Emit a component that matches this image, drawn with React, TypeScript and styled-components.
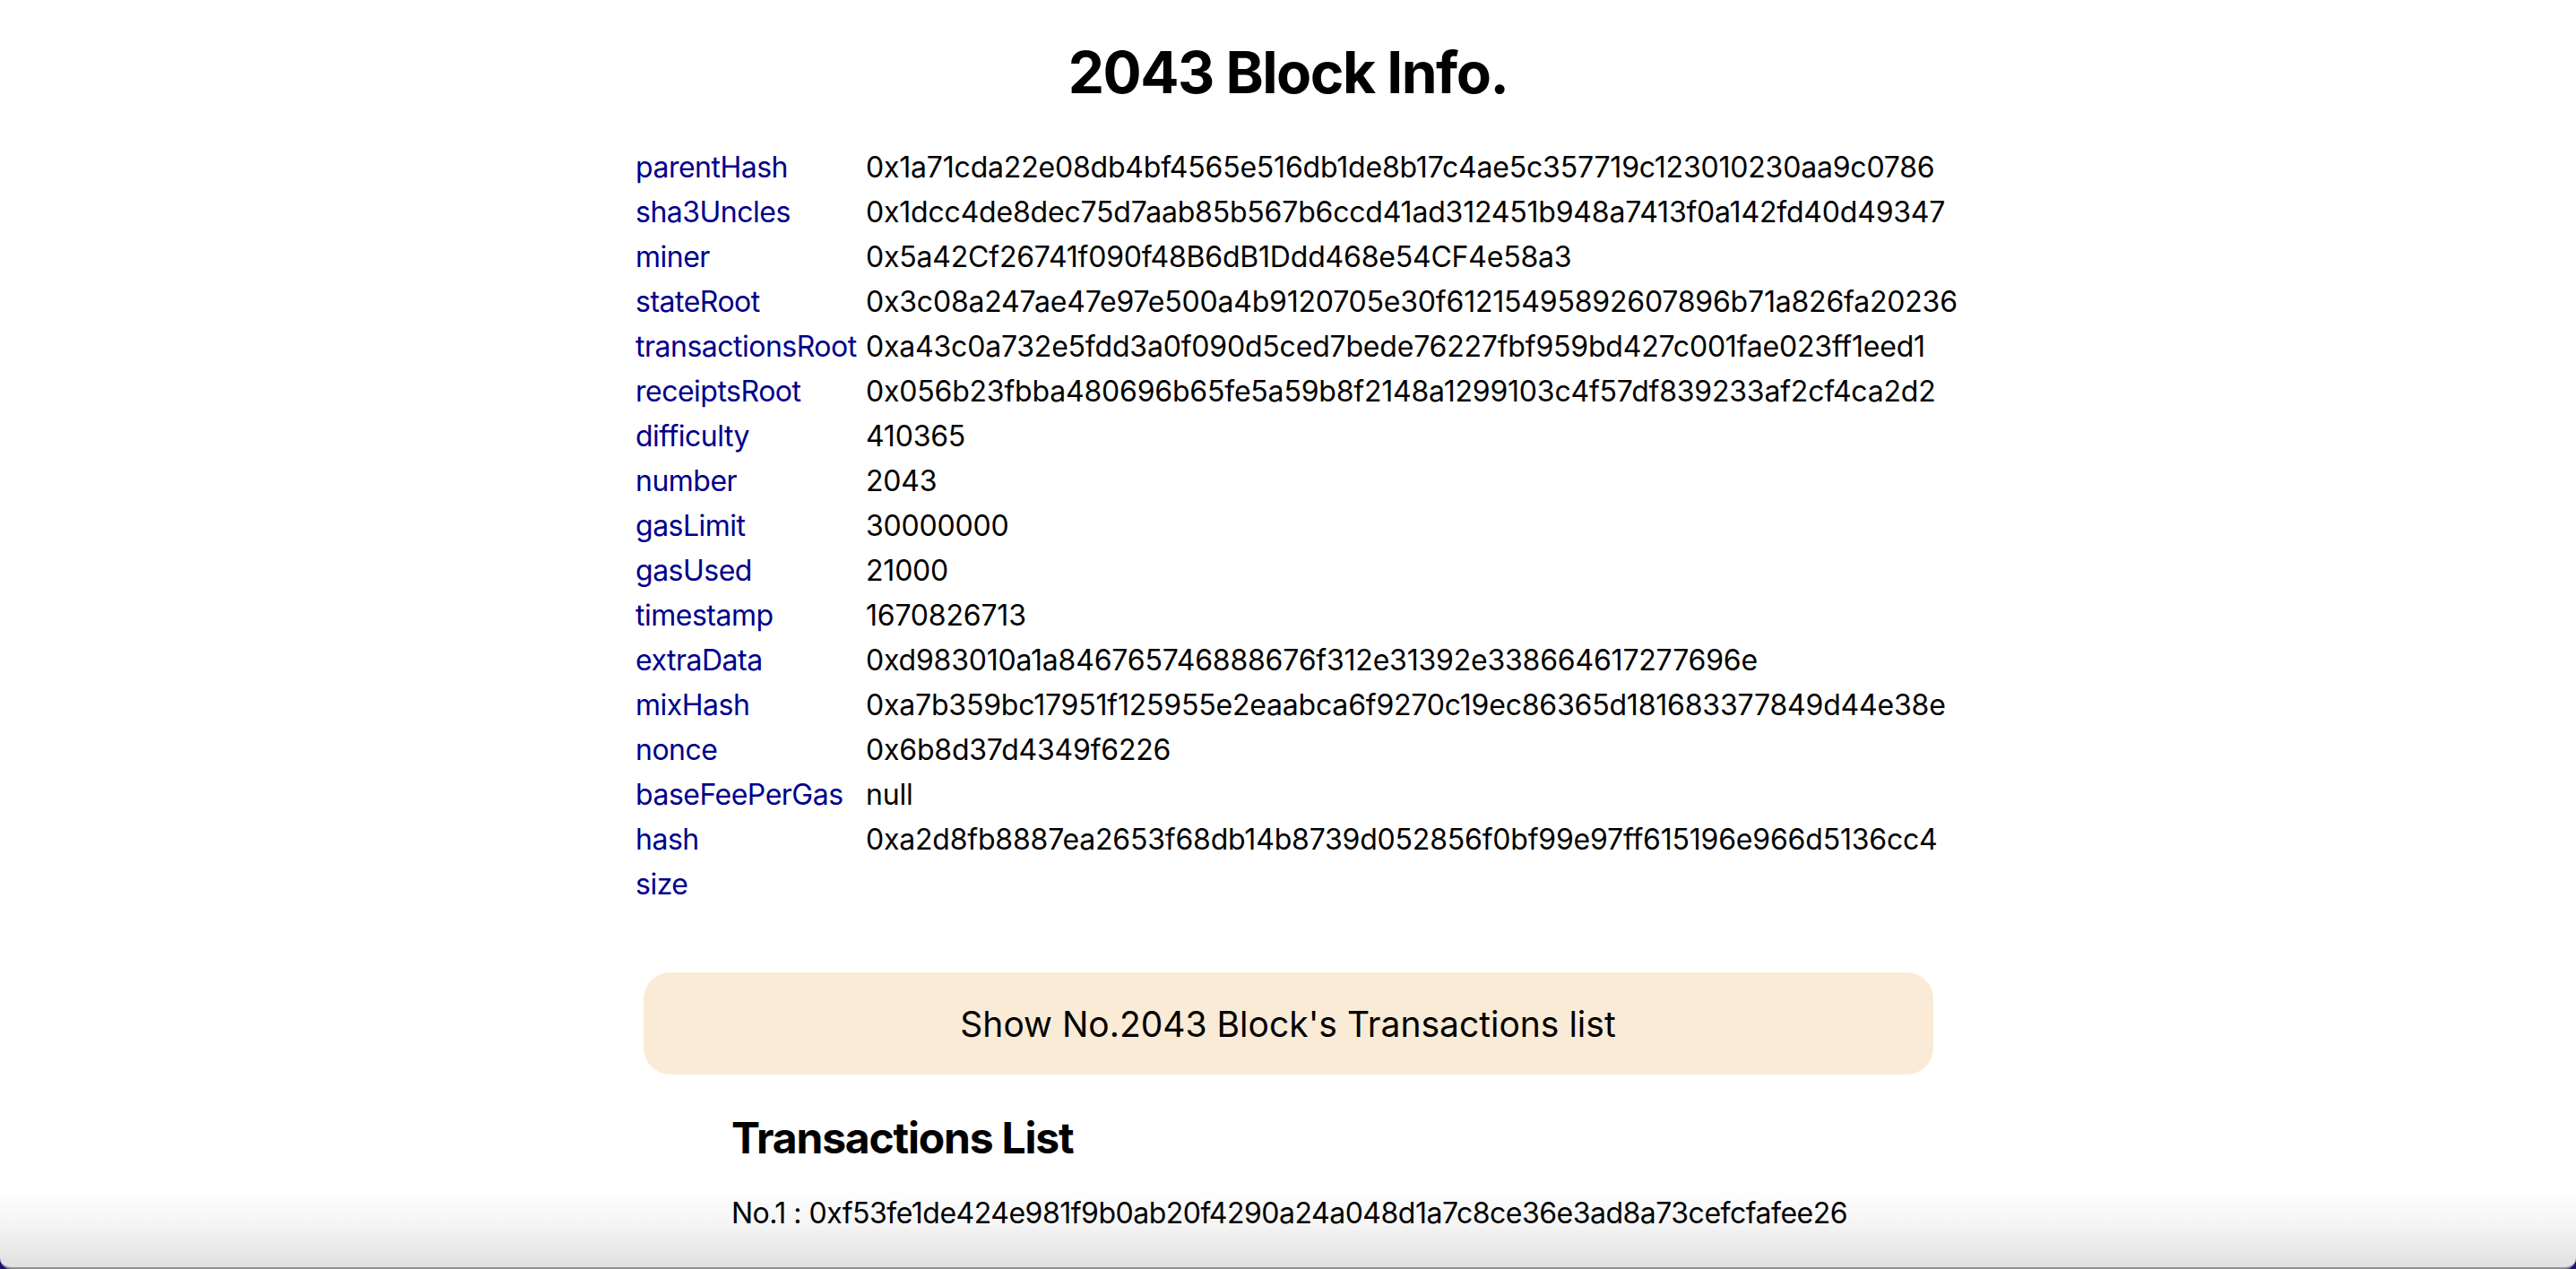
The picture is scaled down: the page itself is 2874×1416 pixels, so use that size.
import React from "react";
import styled, { createGlobalStyle } from "styled-components";

const GlobalStyle = createGlobalStyle`
  html, body {
    margin: 0;
    padding: 0;
    background: #24127a;
  }
  body {
    font-family: Inter, "Liberation Sans", Arial, sans-serif;
    color: #000;
  }
`;

const Frame = styled.div`
  position: relative;
  height: 1414px;
  overflow: hidden;
  background: #ffffff;
  border-radius: 0 0 12px 12px;
  border-bottom: 2px solid #8f8f8f;
  display: flex;
  flex-direction: column;
  align-items: center;
`;

const BottomShade = styled.div`
  position: absolute;
  left: 0;
  right: 0;
  bottom: 0;
  height: 90px;
  pointer-events: none;
  background: linear-gradient(to bottom, rgba(0, 0, 0, 0) 0%, rgba(0, 0, 0, 0.04) 45%, rgba(0, 0, 0, 0.12) 100%);
`;

const Title = styled.h1`
  margin: 43px 0 43px;
  font-size: 64px;
  line-height: 76px;
  font-weight: 700;
  letter-spacing: -1.5px;
  text-align: center;
`;

const InfoGrid = styled.div`
  width: 1456px;
  display: grid;
  grid-template-columns: 245px 1fr;
  column-gap: 12px;
  font-size: 32px;
  line-height: 50px;
`;

const Label = styled.div`
  color: #00008b;
  white-space: nowrap;
  letter-spacing: -0.5px;
`;

const Value = styled.div`
  color: #000;
  white-space: nowrap;
  min-height: 50px;
  letter-spacing: -0.2px;
`;

const ShowButton = styled.button`
  margin-top: 73px;
  width: 1439px;
  height: 114px;
  border: none;
  border-radius: 30px;
  background: #faebd7;
  font-family: inherit;
  font-size: 39px;
  color: #000;
  cursor: pointer;
`;

const TxSection = styled.section`
  align-self: stretch;
  padding-left: 816px;
  display: flex;
  flex-direction: column;
`;

const TxHeading = styled.h2`
  margin: 42px 0 35px;
  font-size: 48px;
  line-height: 58px;
  font-weight: 700;
  letter-spacing: -1.2px;
`;

const TxItem = styled.div`
  font-size: 32px;
  line-height: 40px;
  white-space: nowrap;
  letter-spacing: -0.5px;
`;

const rows: [string, string][] = [
  ["parentHash", "0x1a71cda22e08db4bf4565e516db1de8b17c4ae5c357719c123010230aa9c0786"],
  ["sha3Uncles", "0x1dcc4de8dec75d7aab85b567b6ccd41ad312451b948a7413f0a142fd40d49347"],
  ["miner", "0x5a42Cf26741f090f48B6dB1Ddd468e54CF4e58a3"],
  ["stateRoot", "0x3c08a247ae47e97e500a4b9120705e30f61215495892607896b71a826fa20236"],
  ["transactionsRoot", "0xa43c0a732e5fdd3a0f090d5ced7bede76227fbf959bd427c001fae023ff1eed1"],
  ["receiptsRoot", "0x056b23fbba480696b65fe5a59b8f2148a1299103c4f57df839233af2cf4ca2d2"],
  ["difficulty", "410365"],
  ["number", "2043"],
  ["gasLimit", "30000000"],
  ["gasUsed", "21000"],
  ["timestamp", "1670826713"],
  ["extraData", "0xd983010a1a846765746888676f312e31392e338664617277696e"],
  ["mixHash", "0xa7b359bc17951f125955e2eaabca6f9270c19ec86365d181683377849d44e38e"],
  ["nonce", "0x6b8d37d4349f6226"],
  ["baseFeePerGas", "null"],
  ["hash", "0xa2d8fb8887ea2653f68db14b8739d052856f0bf99e97ff615196e966d5136cc4"],
  ["size", ""],
];

export default function App() {
  return (
    <>
      <GlobalStyle />
      <Frame>
        <Title>2043 Block Info.</Title>
        <InfoGrid>
          {rows.map(([k, v]) => (
            <React.Fragment key={k}>
              <Label>{k}</Label>
              <Value>{v}</Value>
            </React.Fragment>
          ))}
        </InfoGrid>
        <ShowButton>Show No.2043 Block's Transactions list</ShowButton>
        <TxSection>
          <TxHeading>Transactions List</TxHeading>
          <TxItem>No.1 : 0xf53fe1de424e981f9b0ab20f4290a24a048d1a7c8ce36e3ad8a73cefcfafee26</TxItem>
        </TxSection>
        <BottomShade />
      </Frame>
    </>
  );
}
